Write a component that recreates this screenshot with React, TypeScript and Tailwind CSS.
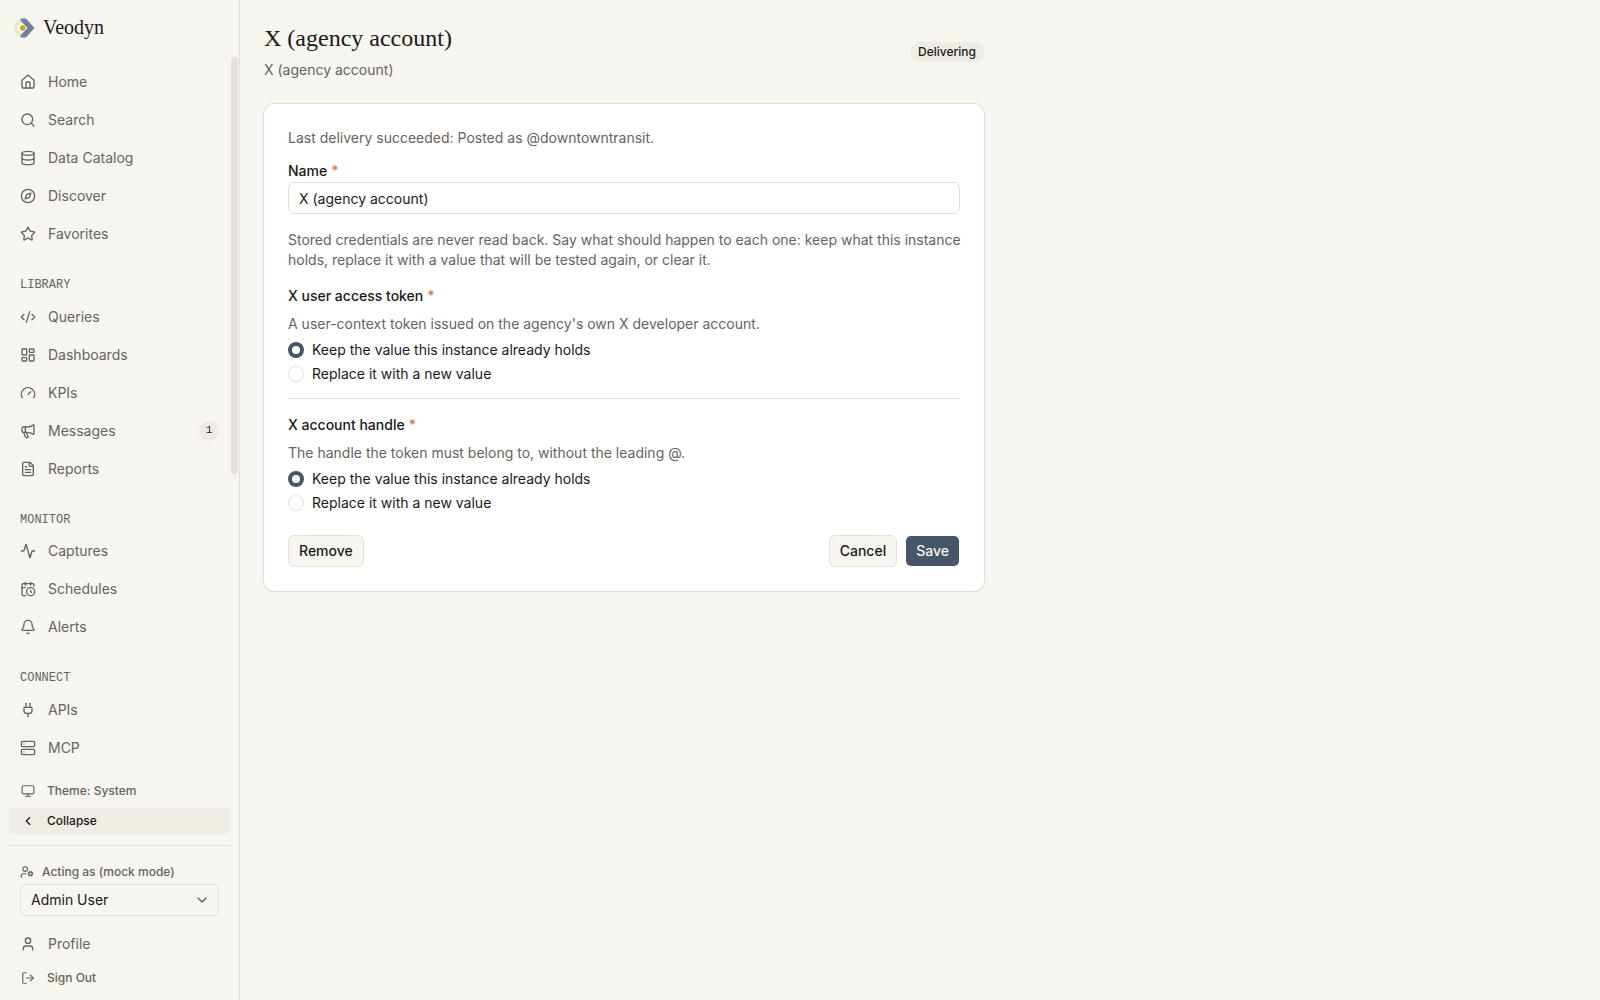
import { useState, type ReactNode } from "react";
import {
  Activity,
  Bell,
  CalendarClock,
  ChevronDown,
  ChevronLeft,
  CodeXml,
  Compass,
  Database,
  FileText,
  Gauge,
  House,
  LayoutDashboard,
  LogOut,
  Megaphone,
  Monitor,
  Plug,
  Search,
  Server,
  Star,
  User,
  UserCog,
  type LucideIcon,
} from "lucide-react";

type Item = { label: string; icon: LucideIcon; badge?: number };

const sections: { title?: string; items: Item[] }[] = [
  {
    items: [
      { label: "Home", icon: House },
      { label: "Search", icon: Search },
      { label: "Data Catalog", icon: Database },
      { label: "Discover", icon: Compass },
      { label: "Favorites", icon: Star },
    ],
  },
  {
    title: "LIBRARY",
    items: [
      { label: "Queries", icon: CodeXml },
      { label: "Dashboards", icon: LayoutDashboard },
      { label: "KPIs", icon: Gauge },
      { label: "Messages", icon: Megaphone, badge: 1 },
      { label: "Reports", icon: FileText },
    ],
  },
  {
    title: "MONITOR",
    items: [
      { label: "Captures", icon: Activity },
      { label: "Schedules", icon: CalendarClock },
      { label: "Alerts", icon: Bell },
    ],
  },
  {
    title: "CONNECT",
    items: [
      { label: "APIs", icon: Plug },
      { label: "MCP", icon: Server },
    ],
  },
];

function Logo() {
  return (
    <svg viewBox="0 0 22 20" className="h-5 w-[22px]" aria-hidden="true">
      <path d="M9 0.600A9.500 9.500 0 0 0 9 19.400L13 14A5 5 0 0 1 9.700 15A5 5 0 0 1 9.700 5A5 5 0 0 1 13 6Z" fill="#ece9cb" />
      <path d="M8 0.500H12Q13 0.500 13.700 1.300L21.500 10L13.700 18.700Q13 19.500 12 19.500H8Q6.800 18.300 8 17L14.500 10L8 3Q6.800 1.700 8 0.500Z" fill="#6f819b" />
      <circle cx="9.700" cy="10" r="2.700" fill="#c9a616" />
    </svg>
  );
}

function NavLink({ label, icon: Icon, badge }: Item) {
  return (
    <a href="#" className="flex h-9 items-center gap-3 rounded-md px-3 text-sm text-[#66645e]">
      <Icon className="size-4" />
      <span className="flex-1">{label}</span>
      {badge !== undefined && (
        <span className="flex size-5 items-center justify-center rounded-full bg-[#efeae3] font-['Liberation_Mono',monospace] text-[11px] text-[#1a1a18]">
          {badge}
        </span>
      )}
    </a>
  );
}

function Sidebar() {
  return (
    <aside className="flex w-60 shrink-0 flex-col border-r border-[#e3dfd8]">
      <a href="#" className="flex h-14 shrink-0 items-center gap-2 px-[13px]">
        <Logo />
        <span className="pb-0.5 font-['Liberation_Serif',serif] text-xl font-medium text-[#1a1a18]">Veodyn</span>
      </a>
      <div className="flex min-h-0 flex-1">
        <nav className="min-w-0 flex-1 overflow-hidden py-2 pl-2">
          {sections.map((section, i) => (
            <div key={i}>
              {section.title && (
                <h2 className="px-3 pt-[25px] pb-[5px] font-['Liberation_Mono',monospace] text-xs leading-snug text-[#66645e]">
                  {section.title}
                </h2>
              )}
              <div className="flex flex-col gap-0.5">
                {section.items.map((item) => (
                  <NavLink key={item.label} {...item} />
                ))}
              </div>
            </div>
          ))}
        </nav>
        <div className="flex w-2 shrink-0 flex-col pt-px">
          <div className="h-[417px] w-[7px] rounded-full bg-[#e5e0d8]" />
        </div>
      </div>
      <div className="flex flex-col gap-1 px-[9px] pt-3 pb-[11px]">
        <button type="button" className="flex h-[26px] items-center gap-3 rounded-md px-3 text-xs font-medium text-[#66645e]">
          <Monitor className="size-3.5" />
          Theme: System
        </button>
        <button type="button" className="flex h-[26px] items-center gap-3 rounded bg-[#efece6] px-3 text-xs font-medium text-[#1a1a18]">
          <ChevronLeft className="size-3.5" />
          Collapse
        </button>
      </div>
      <div className="mx-2 flex flex-col border-t border-[#e3dfd8] pt-[18px] pb-2">
        <label htmlFor="acting" className="flex h-4 items-center gap-2 px-3 text-xs font-medium text-[#66645e]">
          <UserCog className="size-3.5" />
          Acting as (mock mode)
        </label>
        <div className="relative mx-3 mt-1">
          <select
            id="acting"
            className="h-8 w-full appearance-none rounded-md border border-[#e5e0d8] bg-transparent px-2.5 text-sm text-[#1a1a18]"
          >
            <option>Admin User</option>
          </select>
          <ChevronDown className="pointer-events-none absolute top-2 right-[9px] size-4 text-[#66645e]" />
        </div>
        <div className="mt-2.5">
          <NavLink label="Profile" icon={User} />
        </div>
        <button type="button" className="mt-0.5 flex h-7 items-center gap-3 px-[13px] text-xs font-medium text-[#66645e]">
          <LogOut className="size-3.5" />
          Sign Out
        </button>
      </div>
    </aside>
  );
}

function Required() {
  return <span className="text-[#cb7a55]">*</span>;
}

function Credential({ id, title, children }: { id: string; title: string; children: ReactNode }) {
  const [choice, setChoice] = useState("keep");
  const options = [
    { value: "keep", label: "Keep the value this instance already holds" },
    { value: "replace", label: "Replace it with a new value" },
  ];
  return (
    <fieldset className="flex flex-col">
      <legend className="flex gap-1 text-sm font-medium">
        {title} <Required />
      </legend>
      <p className="mt-2 text-sm text-[#66645e]">{children}</p>
      {options.map((o) => (
        <label key={o.value} className="mt-2 flex h-4 items-center gap-2 text-sm">
          <input
            type="radio"
            name={id}
            checked={choice === o.value}
            onChange={() => setChoice(o.value)}
            className="size-4 appearance-none rounded-full border border-[#e5e0d8] bg-white checked:border-4 checked:border-[#475569]"
          />
          {o.label}
        </label>
      ))}
    </fieldset>
  );
}

export default function App() {
  return (
    <div className="flex h-screen bg-[#f6f5f0] font-[Inter,sans-serif] text-[#1a1a18]">
      <Sidebar />
      <main className="min-w-0 flex-1 overflow-auto p-6">
        <div className="flex max-w-[720px] flex-col gap-6">
          <header className="flex items-center justify-between gap-4">
            <div className="flex flex-col gap-2">
              <h1 className="font-['Liberation_Serif',serif] text-2xl leading-7 font-medium">X (agency account)</h1>
              <p className="text-sm text-[#66645e]">X (agency account)</p>
            </div>
            <span className="flex h-5 items-center rounded-full bg-[#efece6] px-2 text-xs font-medium">Delivering</span>
          </header>
          <form className="flex flex-col gap-4 rounded-[10px] bg-white p-6 ring-1 ring-[#e3dfd8]">
            <p className="text-sm text-[#66645e]">Last delivery succeeded: Posted as @downtowntransit.</p>
            <div className="flex flex-col gap-1">
              <label htmlFor="name" className="flex gap-1 text-sm leading-[14px] font-medium">
                Name <Required />
              </label>
              <input
                id="name"
                defaultValue="X (agency account)"
                className="h-8 w-full rounded-md border border-[#e5e0d8] bg-white px-2.5 text-sm"
              />
            </div>
            <p className="-mr-2 text-sm text-[#66645e]">
              Stored credentials are never read back. Say what should happen to each one: keep what this instance
              holds, replace it with a value that will be tested again, or clear it.
            </p>
            <div className="border-b border-[#e5e0d8] pb-4">
              <Credential id="token" title="X user access token">
                A user-context token issued on the agency's own X developer account.
              </Credential>
            </div>
            <Credential id="handle" title="X account handle">
              The handle the token must belong to, without the leading @.
            </Credential>
            <div className="mt-2 flex items-center gap-2">
              <button type="button" className="mr-auto h-8 rounded-md border border-[#e5e0d8] bg-[#f6f5f0] px-2.5 text-sm font-medium">
                Remove
              </button>
              <button type="button" className="h-8 rounded-md border border-[#e5e0d8] bg-[#f6f5f0] px-2.5 text-sm font-medium">
                Cancel
              </button>
              <button type="submit" className="h-8 rounded-md border border-transparent bg-[#475569] bg-clip-padding px-2.5 text-sm font-medium text-[#f6f5f0]">
                Save
              </button>
            </div>
          </form>
        </div>
      </main>
    </div>
  );
}
